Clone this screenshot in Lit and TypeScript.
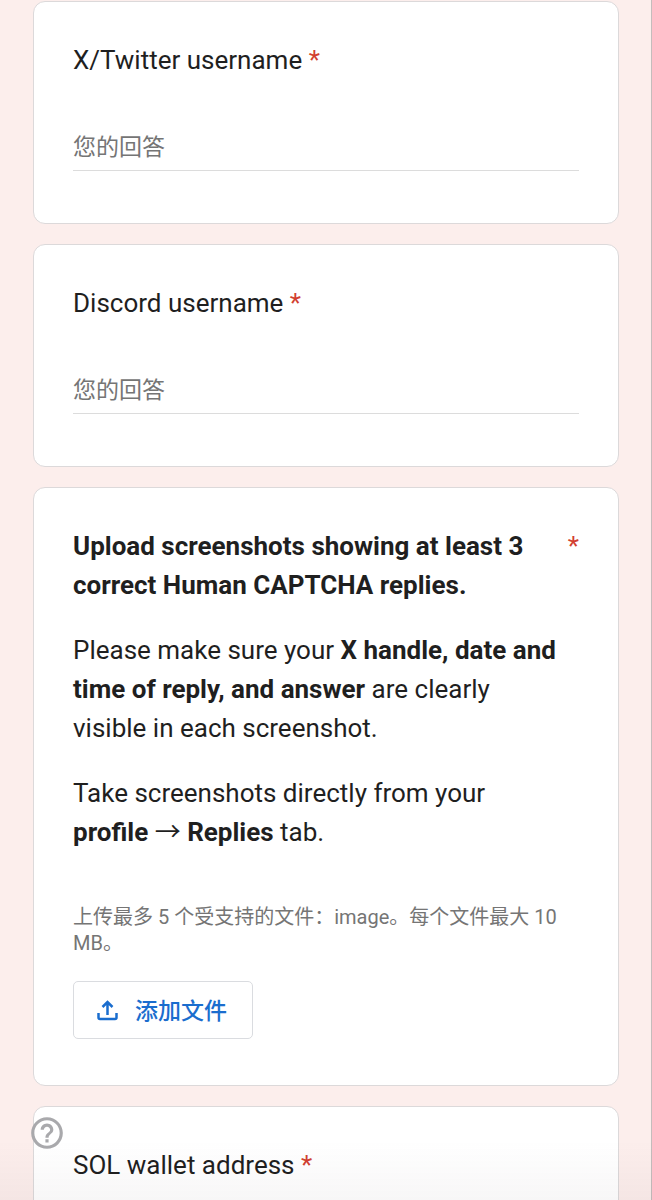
import { LitElement, html, css } from "lit";
import { customElement, property } from "lit/decorators.js";

@customElement("question-card")
class QuestionCard extends LitElement {
  @property() label = "";
  static styles = css`
    :host { display: block; }
    .card { padding: 39px 39px 52px; border: 1px solid #dcd9da; border-radius: 12px; background: #fff; }
    .title { display: block; font-size: 26px; line-height: 39px; }
    .star { color: #d23f31; }
    .field { display: block; box-sizing: border-box; width: 100%; height: 48px; margin: 43px 0 0; padding: 2px 0 0; border: 0; border-bottom: 1px solid #dcdcdc; border-radius: 0; outline: 0; background: transparent; font-family: inherit; font-size: 23px; color: #1f1f1f; }
    .field::placeholder { color: #757575; opacity: 1; }
  `;
  render() {
    return html`<div class="card">
      <label class="title" for="answer">${this.label} <span class="star">*</span></label>
      <input class="field" id="answer" type="text" placeholder="您的回答" required />
    </div>`;
  }
}

@customElement("app-root")
class AppRoot extends LitElement {
  static styles = css`
    :host { display: block; box-sizing: border-box; min-height: 100vh; border-right: 1px solid #c4bcbc; background: #fceeec; color: #1f1f1f; font-family: Roboto, "Noto Sans CJK SC", sans-serif; }
    .form { display: flex; flex-direction: column; gap: 20px; padding: 1px 32px 20px 33px; }
    .upload { padding: 39px 39px 46px; border: 1px solid #dcd9da; border-radius: 12px; background: #fff; font-size: 26px; line-height: 39px; }
    .head { display: flex; justify-content: space-between; gap: 40px; }
    h2 { margin: 0; font: inherit; font-weight: 700; }
    p { margin: 26px 20px 0 0; }
    .short { margin-right: 90px; }
    .star { color: #d23f31; }
    .hint { margin: 52px 0 0; font-size: 20px; line-height: 26px; color: #757575; }
    .add { display: flex; align-items: center; gap: 15px; height: 58px; margin-top: 25px; padding: 0 25px 2px 21px; border: 1px solid #dadce0; border-radius: 5px; background: #fff; color: #1a6dce; font-family: inherit; font-size: 23px; font-weight: 500; }
    .add svg { width: 25px; height: 25px; }
    .help { position: fixed; left: 28px; bottom: 48px; width: 38px; height: 38px; padding: 0; border: 0; background: none; color: #a9a9ac; }
    .help svg { display: block; width: 38px; height: 38px; }
    .shade { position: fixed; left: 0; right: 0; bottom: 0; height: 60px; background: linear-gradient(transparent, rgba(60, 40, 50, 0.04)); pointer-events: none; }
  `;
  render() {
    return html`<form class="form">
        <question-card label="X/Twitter username"></question-card>
        <question-card label="Discord username"></question-card>
        <section class="upload">
          <div class="head"><h2>Upload screenshots showing at least 3 correct Human CAPTCHA replies.</h2><span class="star">*</span></div>
          <p>Please make sure your <b>X handle, date and time of reply, and answer</b> are clearly visible in each screenshot.</p>
          <p class="short">Take screenshots directly from your <b>profile</b> → <b>Replies</b> tab.</p>
          <p class="hint">上传最多 5 个受支持的文件：image。每个文件最大 10 MB。</p>
          <button class="add" type="button">
            <svg viewBox="0 0 25 25" fill="none" stroke="currentColor" stroke-width="2.500"><path d="M3.500 16v4.500q0 1.500 1.500 1.500h15q1.500 0 1.500-1.500V16M12.500 18V5M7.500 10l5-5 5 5" /></svg>添加文件
          </button>
        </section>
        <question-card label="SOL wallet address"></question-card>
      </form>
      <div class="shade"></div>
      <button class="help" type="button" aria-label="帮助">
        <svg viewBox="0 0 24 24" fill="currentColor"><path d="M11 18h2v-2h-2v2zm1-16C6.480 2 2 6.480 2 12s4.480 10 10 10 10-4.480 10-10S17.520 2 12 2zm0 18c-4.410 0-8-3.590-8-8s3.590-8 8-8 8 3.590 8 8-3.590 8-8 8zm0-14c-2.210 0-4 1.790-4 4h2c0-1.100.9-2 2-2s2 .9 2 2c0 2-3 1.750-3 5h2c0-2.250 3-2.500 3-5 0-2.210-1.790-4-4-4z" /></svg>
      </button>`;
  }
}
